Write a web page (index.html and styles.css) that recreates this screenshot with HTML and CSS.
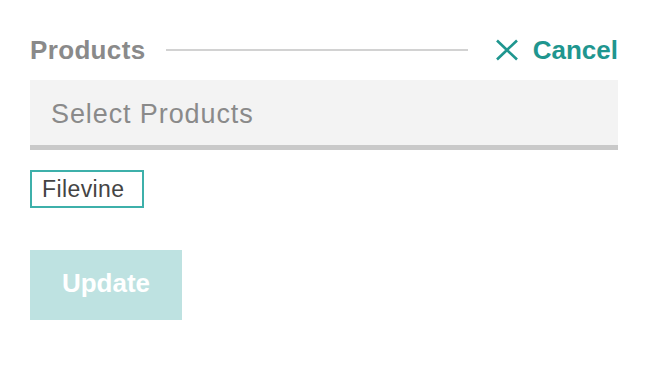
FILE: index.html
```html
<!DOCTYPE html>
<html lang="en">
<head>
<meta charset="utf-8">
<title>Products</title>
<link rel="stylesheet" href="styles.css">
</head>
<body>
<div class="panel">
  <div class="header">
    <span class="title">Products</span>
    <span class="rule"></span>
    <button class="cancel" type="button">
      <svg class="cancel-icon" width="24" height="22" viewBox="0 0 24 22" aria-hidden="true">
        <path d="M2 1.5 L22 20.5 M22 1.5 L2 20.5" stroke="currentColor" stroke-width="2.6" fill="none" stroke-linecap="butt"/>
      </svg>
      <span class="cancel-text">Cancel</span>
    </button>
  </div>
  <div class="select">
    <span class="placeholder">Select Products</span>
  </div>
  <div class="tags">
    <span class="tag">Filevine</span>
  </div>
  <button class="update" type="button">Update</button>
</div>
</body>
</html>
```
FILE: styles.css
```css
html, body {
  margin: 0;
  padding: 0;
  background: #ffffff;
}

body {
  font-family: "Liberation Sans", Arial, sans-serif;
}

.panel {
  width: 588px;
  padding: 35px 0 0 30px;
  display: flex;
  flex-direction: column;
  align-items: flex-start;
}

.header {
  width: 100%;
  height: 30px;
  display: flex;
  align-items: center;
}

.title {
  font-size: 26px;
  line-height: 30px;
  font-weight: bold;
  color: #8a8a8a;
  letter-spacing: 0.35px;
}

.rule {
  flex: 1;
  height: 2px;
  background: #d2d2d2;
  margin: 0 27px 0 21px;
}

.cancel {
  display: flex;
  align-items: center;
  gap: 14px;
  padding: 0;
  margin: 0;
  border: 0;
  background: none;
  color: #1f968f;
  font-family: inherit;
  cursor: pointer;
}

.cancel-icon {
  display: block;
}

.cancel-text {
  font-size: 26px;
  line-height: 30px;
  font-weight: bold;
}

.select {
  box-sizing: border-box;
  width: 100%;
  height: 70px;
  margin-top: 15px;
  background: #f3f3f3;
  border-bottom: 5px solid #c9c9c9;
  display: flex;
  align-items: center;
  padding: 3px 0 0 21px;
}

.placeholder {
  font-size: 27px;
  color: #8a8a8a;
  letter-spacing: 0.9px;
}

.tags {
  margin-top: 20px;
  display: flex;
}

.tag {
  border: 2px solid #3db0aa;
  padding: 0 18px 0 10px;
  height: 34px;
  line-height: 34px;
  font-size: 23px;
  letter-spacing: 0.4px;
  color: #444444;
}

.update {
  margin-top: 42px;
  width: 152px;
  height: 70px;
  padding: 0 0 4px 0;
  border: 0;
  background: #bee2e1;
  color: #ffffff;
  font-family: inherit;
  font-size: 26px;
  font-weight: bold;
  display: flex;
  align-items: center;
  justify-content: center;
}
```
